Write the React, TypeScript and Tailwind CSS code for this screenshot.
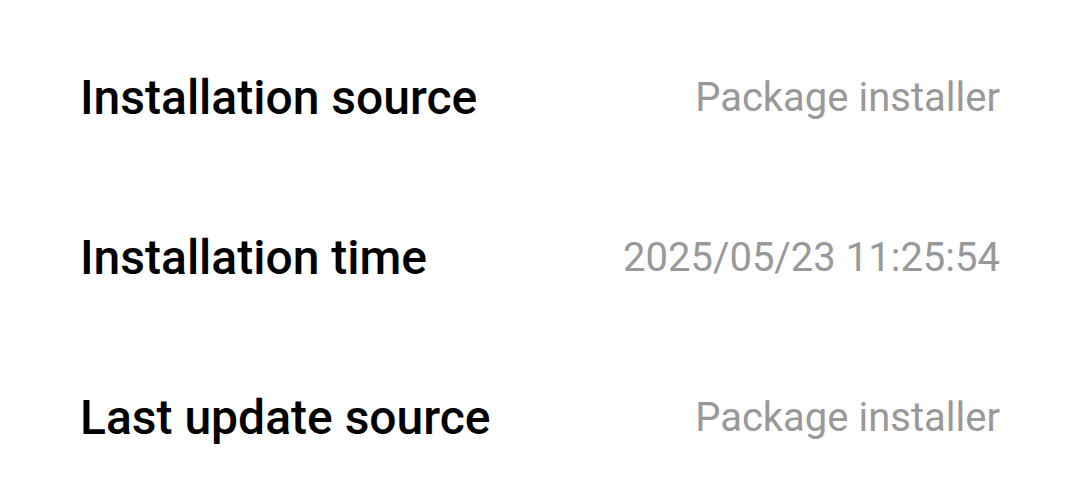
export default function App() {
  const rows = [
    { label: "Installation source", value: "Package installer" },
    { label: "Installation time", value: "2025/05/23 11:25:54" },
    { label: "Last update source", value: "Package installer" },
  ];
  return (
    <div className="w-[1080px] h-[500px] bg-white pt-[18px] px-[80px] overflow-hidden" style={{ fontFamily: "Roboto, 'Noto Sans', sans-serif" }}>
      {rows.map((r) => (
        <div key={r.label} className="flex h-[160px] items-center justify-between">
          <span className="text-[48px] font-medium text-black leading-none">{r.label}</span>
          <span className="text-[40px] text-[#999999] leading-none">{r.value}</span>
        </div>
      ))}
    </div>
  );
}
